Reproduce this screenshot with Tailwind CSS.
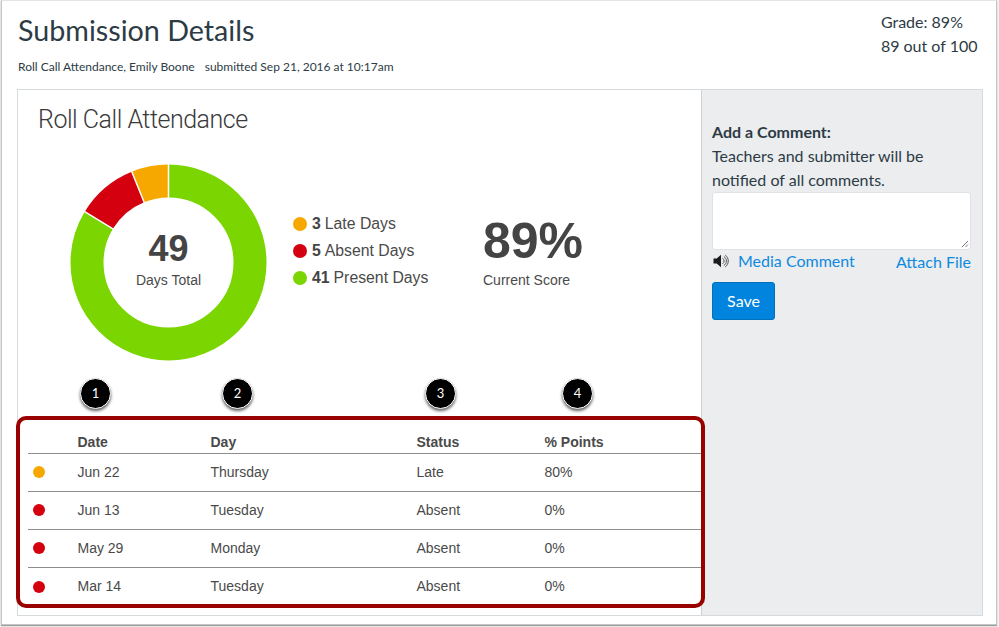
<!DOCTYPE html>
<html>
<head>
<meta charset="utf-8">
<script src="https://cdn.jsdelivr.net/npm/@tailwindcss/browser@4"></script>
</head>
<body class="bg-white m-0">
<div class="w-[999px] h-[627px] overflow-hidden bg-[#f4f4f4]">
  <div class="relative w-[996px] h-[625px] ml-[1px] bg-white border border-[#c4c4c4] border-t-[#e4e4e4] shadow-[0_1px_1px_rgba(0,0,0,0.35)] font-['Lato',sans-serif]">
    <header class="h-[88px] flex justify-between pl-[16px] pr-[18.5px]">
      <div>
        <h1 class="text-[28.7px] leading-[36px] pt-[11px] text-[#2d3b45] font-normal">Submission Details</h1>
        <p class="text-[12px] leading-[16px] mt-[11px] text-[#2d3b45] whitespace-pre">Roll Call Attendance, Emily Boone<span class="inline-block w-[10px]"></span>submitted Sep 21, 2016 at 10:17am</p>
      </div>
      <div class="text-[16px] leading-[24px] pt-[9px] text-[#2d3b45]">
        <p>Grade: 89%</p>
        <p>89 out of 100</p>
      </div>
    </header>
    <div class="flex h-[527px] ml-[15px] w-[966px] border border-[#d5dadd]">
      <main class="relative w-[683px] shrink-0 font-['Liberation_Sans',sans-serif] text-[#4a4a4a]">
        <h2 class="text-[25px] leading-[30px] pl-[20px] pt-[15px] text-[#3a3a3a] font-['Roboto',sans-serif] font-light tracking-[-0.48px]">Roll Call Attendance</h2>
        <div class="flex items-start mt-[29px] pl-[52px] h-[198px]">
          <div class="relative w-[197px] h-[197px] shrink-0">
            <svg width="197" height="197" viewBox="0 0 197 197">
              <g transform="rotate(-90 98.5 98.5)" fill="none" stroke-width="33">
                <circle cx="98.5" cy="98.5" r="81.5" pathLength="49" stroke="#7ad500" stroke-dasharray="41 8"></circle>
                <circle cx="98.5" cy="98.5" r="81.5" pathLength="49" stroke="#d5000f" stroke-dasharray="5 44" stroke-dashoffset="-41"></circle>
                <circle cx="98.5" cy="98.5" r="81.5" pathLength="49" stroke="#f7a800" stroke-dasharray="3 46" stroke-dashoffset="-46"></circle>
              </g>
              <g stroke="#fff" stroke-width="1.5">
                <line x1="98.5" y1="0" x2="98.5" y2="34"></line>
                <line x1="98.5" y1="0" x2="98.5" y2="34" transform="rotate(-22 98.5 98.5)"></line>
                <line x1="98.5" y1="0" x2="98.5" y2="34" transform="rotate(-58.8 98.5 98.5)"></line>
              </g>
            </svg>
            <div class="absolute inset-0 flex flex-col items-center pt-[64px]">
              <span class="text-[36px] leading-[42px] font-bold text-[#444]">49</span>
              <span class="text-[14px] leading-[18px] mt-[1px] text-[#4a4a4a]">Days Total</span>
            </div>
          </div>
          <ul class="ml-[26px] mt-[46px] w-[190px] text-[15.8px] leading-[27px] text-[#4a4a4a]">
            <li class="flex items-center"><span class="w-[14px] h-[14px] rounded-full bg-[#f7a800] mr-[5px]"></span><b class="mr-[4px] text-[#444]">3</b>Late Days</li>
            <li class="flex items-center"><span class="w-[14px] h-[14px] rounded-full bg-[#d5000f] mr-[5px]"></span><b class="mr-[4px] text-[#444]">5</b>Absent Days</li>
            <li class="flex items-center"><span class="w-[14px] h-[14px] rounded-full bg-[#7ad500] mr-[5px]"></span><b class="mr-[4px] text-[#444]">41</b>Present Days</li>
          </ul>
          <div class="mt-[48px]">
            <p class="text-[50px] leading-[58px] font-bold text-[#444]">89%</p>
            <p class="text-[14px] leading-[18px] mt-[1px] text-[#4a4a4a]">Current Score</p>
          </div>
        </div>
        <table class="block absolute left-[10px] top-[336px] w-[673px] text-[14px]">
          <thead class="block">
            <tr class="flex h-[28px] items-end font-bold text-[#4a4a4a] border-b border-[#8c8c8c]">
              <th class="w-[49.5px]"></th>
              <th class="w-[133px] text-left">Date</th>
              <th class="w-[206px] text-left">Day</th>
              <th class="w-[128px] text-left">Status</th>
              <th class="text-left">% Points</th>
            </tr>
          </thead>
          <tbody class="block">
            <tr class="flex h-[38px] items-center border-b border-[#8c8c8c]">
              <td class="w-[49.5px] pl-[5px] pb-[1px]"><span class="block w-[12px] h-[12px] rounded-full bg-[#f7a800]"></span></td>
              <td class="w-[133px]">Jun 22</td><td class="w-[206px]">Thursday</td><td class="w-[128px]">Late</td><td>80%</td>
            </tr>
            <tr class="flex h-[38px] items-center border-b border-[#8c8c8c]">
              <td class="w-[49.5px] pl-[5px] pb-[1px]"><span class="block w-[12px] h-[12px] rounded-full bg-[#d5000f]"></span></td>
              <td class="w-[133px]">Jun 13</td><td class="w-[206px]">Tuesday</td><td class="w-[128px]">Absent</td><td>0%</td>
            </tr>
            <tr class="flex h-[38px] items-center border-b border-[#8c8c8c]">
              <td class="w-[49.5px] pl-[5px] pb-[1px]"><span class="block w-[12px] h-[12px] rounded-full bg-[#d5000f]"></span></td>
              <td class="w-[133px]">May 29</td><td class="w-[206px]">Monday</td><td class="w-[128px]">Absent</td><td>0%</td>
            </tr>
            <tr class="flex h-[37px] items-center">
              <td class="w-[49.5px] pl-[5px]"><span class="block w-[12px] h-[12px] rounded-full bg-[#d5000f]"></span></td>
              <td class="w-[133px]">Mar 14</td><td class="w-[206px]">Tuesday</td><td class="w-[128px]">Absent</td><td>0%</td>
            </tr>
          </tbody>
        </table>
        <div class="absolute left-[-2px] top-[326px] w-[689px] h-[192px] border-[4px] border-[#990000] rounded-[10px]"></div>
        <span class="absolute left-[62px] top-[288px] w-[31px] h-[31px] rounded-full bg-black border border-white text-white text-[13px] font-['Lato',sans-serif] flex items-center justify-center shadow-[0_2px_3px_rgba(0,0,0,0.6)]">1</span>
        <span class="absolute left-[204px] top-[288px] w-[31px] h-[31px] rounded-full bg-black border border-white text-white text-[13px] font-['Lato',sans-serif] flex items-center justify-center shadow-[0_2px_3px_rgba(0,0,0,0.6)]">2</span>
        <span class="absolute left-[407px] top-[288px] w-[31px] h-[31px] rounded-full bg-black border border-white text-white text-[13px] font-['Lato',sans-serif] flex items-center justify-center shadow-[0_2px_3px_rgba(0,0,0,0.6)]">3</span>
        <span class="absolute left-[544px] top-[288px] w-[31px] h-[31px] rounded-full bg-black border border-white text-white text-[13px] font-['Lato',sans-serif] flex items-center justify-center shadow-[0_2px_3px_rgba(0,0,0,0.6)]">4</span>
      </main>
      <aside class="flex-1 bg-[#ebedef] border-l border-[#ccd1d5] px-[10px] pt-[30px] text-[#2d3b45] text-[16px] leading-[24px]">
        <p class="font-bold">Add a Comment:</p>
        <p>Teachers and submitter will be notified of all comments.</p>
        <div class="relative h-[58px] w-[259px] bg-white border border-[#dfe3e6] rounded-[3px]">
          <svg class="absolute right-[1px] bottom-[1px]" width="8" height="8" viewBox="0 0 8 8"><path d="M1 7L7 1M4.5 7L7 4.5" stroke="#777" stroke-width="1"></path></svg>
        </div>
        <div class="flex justify-between items-start w-[259px] h-[32px] text-[#0e8ae0]">
          <span class="flex items-center mt-[-1px]">
            <svg width="16" height="14" viewBox="0 0 16 14" class="ml-[1px] mr-[9px]"><path d="M0.5 4.5h3.2L8 0.8v12.4L3.7 9.5H0.5z" fill="#1c1c1c"></path><path d="M9.5 4.2a3.3 3.3 0 0 1 0 5.6M10.8 2.4a5.4 5.4 0 0 1 0 9.2M12.2 1a7.4 7.4 0 0 1 0 12" stroke="#555" stroke-width="1" fill="none"></path></svg>
            Media Comment
          </span>
          <span>Attach File</span>
        </div>
        <button class="w-[63px] h-[38px] bg-[#0084dd] border border-[#0070bb] rounded-[3px] text-white text-[16px]">Save</button>
      </aside>
    </div>
  </div>
</div>
</body>
</html>
